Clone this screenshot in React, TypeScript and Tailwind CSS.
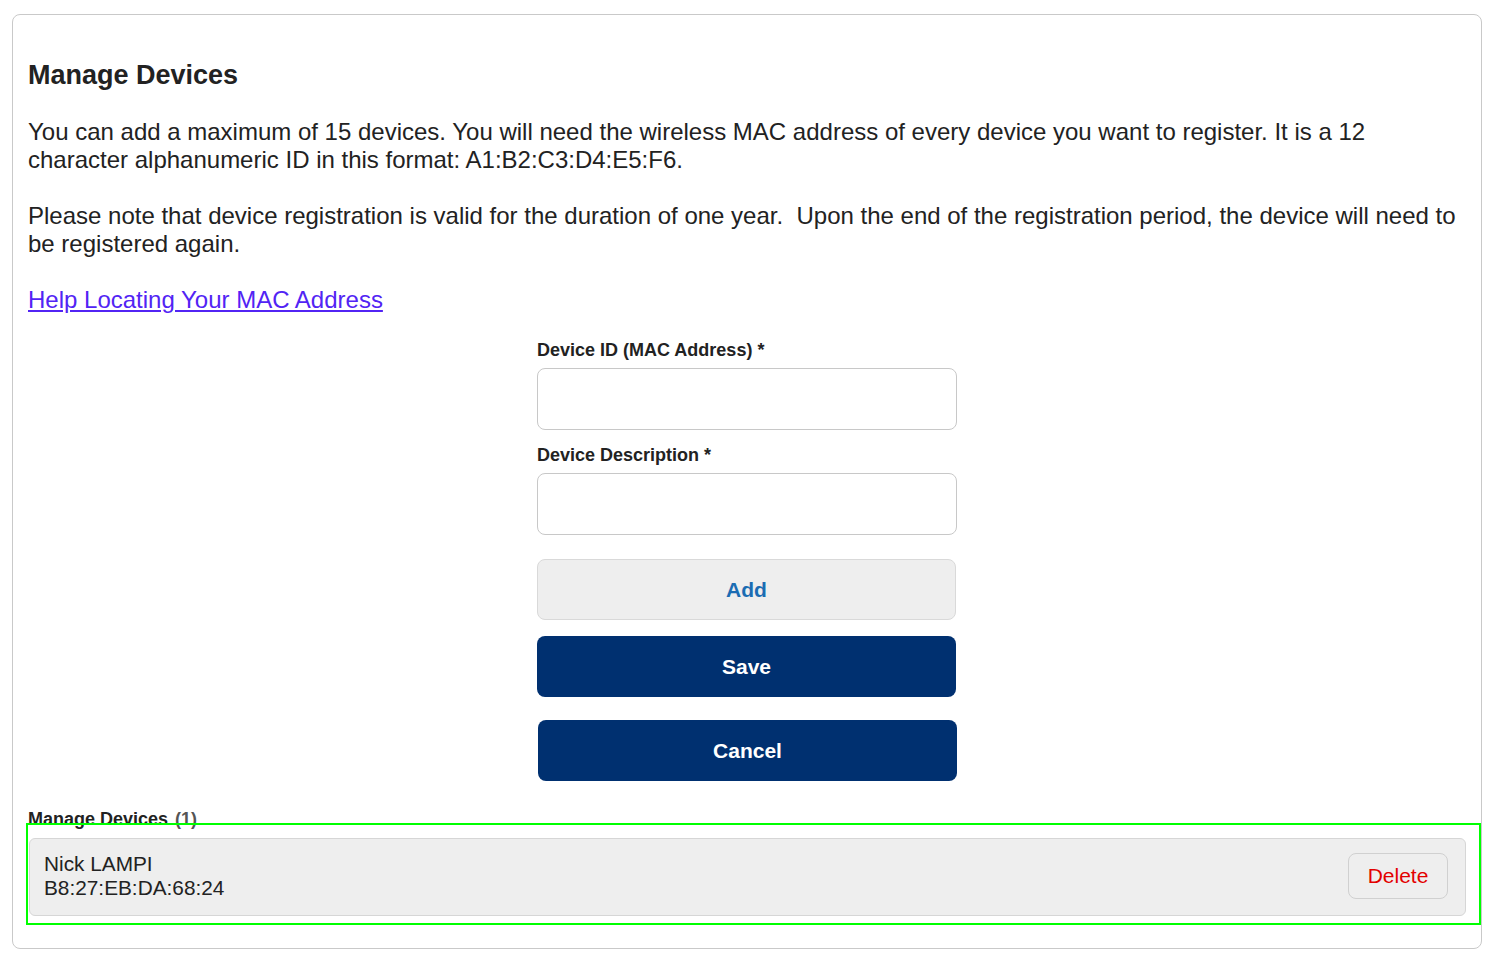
import React from "react";

export default function App() {
  return (
    <div className="min-h-[960px] bg-white pt-[14px] pl-[12px] pb-[12px]" style={{ fontFamily: '"Liberation Sans", Arial, sans-serif' }}>
      <div className="w-[1470px] h-[935px] border border-[#c9c9c9] rounded-[8px] px-[15px] pt-[45px] text-[#222222]">
        <h1 className="text-[27px] leading-[31px] font-bold">Manage Devices</h1>
        <p className="mt-[27px] text-[24px] leading-[28px]">
          You can add a maximum of 15 devices. You will need the wireless MAC address of every device you want to register. It is a 12 character alphanumeric ID in this format: A1:B2:C3:D4:E5:F6.
        </p>
        <p className="mt-[28px] text-[24px] leading-[28px]">
          Please note that device registration is valid for the duration of one year.&nbsp; Upon the end of the registration period, the device will need to be registered again.
        </p>
        <p className="mt-[28px] text-[24px] leading-[28px]">
          <a href="#" className="text-[#5224f4] underline">Help Locating Your MAC Address</a>
        </p>

        <div className="mt-[26px] ml-[509px] w-[420px] flex flex-col">
          <label className="text-[18px] leading-[20px] font-bold">Device ID (MAC Address) *</label>
          <input className="mt-[8px] h-[62px] w-[420px] border border-[#c8c8c8] rounded-[8px] bg-white" />
          <label className="mt-[15px] text-[18px] leading-[20px] font-bold">Device Description *</label>
          <input className="mt-[8px] h-[62px] w-[420px] border border-[#c8c8c8] rounded-[8px] bg-white" />
          <button className="mt-[24px] h-[61px] w-[419px] bg-[#eeeeee] border border-[#d9d9d9] rounded-[8px] text-[21px] font-bold text-[#1b6cb3]">Add</button>
          <button className="mt-[16px] h-[61px] w-[419px] bg-[#003070] rounded-[8px] text-[21px] font-bold text-white">Save</button>
          <button className="mt-[23px] ml-[1px] h-[61px] w-[419px] bg-[#003070] rounded-[8px] text-[21px] font-bold text-white">Cancel</button>
        </div>

        <div className="relative mt-[28px]">
          <div className="text-[18px] leading-[20px] font-bold">
            Manage Devices <span className="text-[#555555] ml-[2px]">(1)</span>
          </div>
          <div className="mt-[9px] ml-[1px] w-[1437px] h-[78px] bg-[#eeeeee] border border-[#d6d6d6] rounded-[6px] flex items-start justify-between pl-[14px] pr-[17px]">
            <div className="pt-[13px] text-[20.8px] leading-[24px]">
              <div>Nick LAMPI</div>
              <div>B8:27:EB:DA:68:24</div>
            </div>
            <button className="mt-[14px] w-[100px] h-[46px] border border-[#d0d0d0] rounded-[8px] bg-[#eeeeee] text-[21px] text-[#e30000]">Delete</button>
          </div>
          <div className="absolute left-[-2px] top-[14px] w-[1455px] h-[102px] border-2 border-[#00ff00] pointer-events-none" />
        </div>
      </div>
    </div>
  );
}
